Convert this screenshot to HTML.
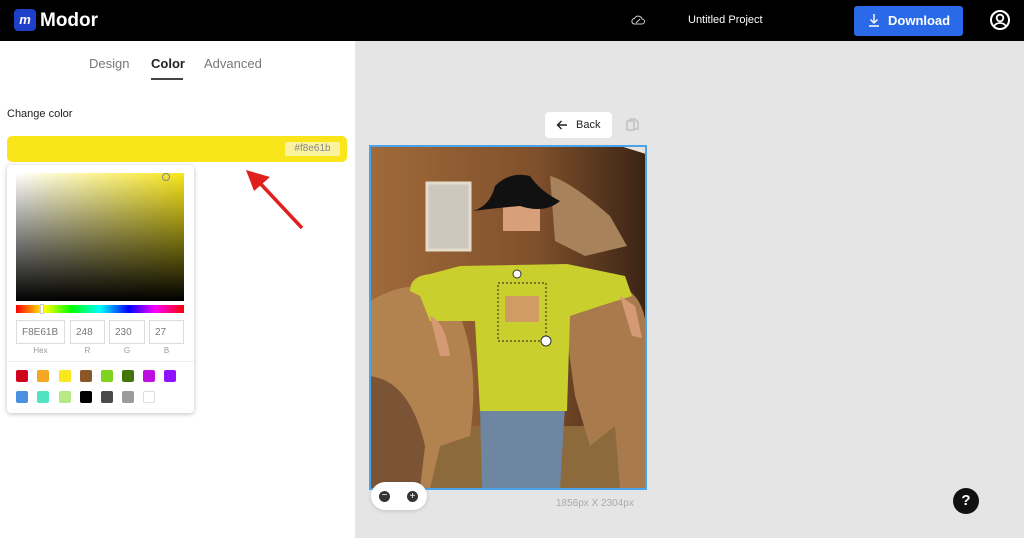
<!DOCTYPE html>
<html><head><meta charset="utf-8"><style>
*{box-sizing:border-box;margin:0;padding:0}
body{width:1024px;height:538px;overflow:hidden;font-family:"Liberation Sans",sans-serif;background:#e5e5e5;position:relative}
.top{position:absolute;left:0;top:0;width:1024px;height:41px;background:#000}
.abs{position:absolute}
.left{position:absolute;left:0;top:41px;width:355px;height:497px;background:#fff}
.sw{position:absolute;width:12px;height:12px;border-radius:2px}
.inp{position:absolute;top:320px;height:24px;border:1px solid #ddd;font-size:10px;color:#777;padding:6px 0 0 5px}
.lab{position:absolute;top:346px;font-size:8px;color:#999;text-align:center}
</style></head><body>
<div class="top"></div>
<div class="abs" style="left:14px;top:9px;width:22px;height:22px;background:#1e3fc7;border-radius:4px;color:#fff;font-style:italic;font-weight:bold;font-size:13px;text-align:center;line-height:21px">m</div>
<div class="abs" style="left:40px;top:10px;color:#fff;font-weight:bold;font-size:19px">Modor</div>
<svg class="abs" style="left:631px;top:14px" width="14" height="12" viewBox="0 0 14 12"><path d="M3 10h8a2.5 2.5 0 0 0 0-5 4 4 0 0 0-7.5-.5A2.8 2.8 0 0 0 3 10z M5 9l4-4" fill="none" stroke="#ccc" stroke-width="1"/></svg>
<div class="abs" style="left:688px;top:14px;color:#fff;font-size:11px">Untitled Project</div>
<div class="abs" style="left:854px;top:6px;width:109px;height:30px;background:#2a6ae8;border-radius:3px;color:#fff;font-size:13px;padding:7px 0 0 34px;font-weight:bold">Download</div>
<svg class="abs" style="left:868px;top:13px" width="12" height="14" viewBox="0 0 12 14"><path d="M6 1v9M2.5 6.5 6 10l3.5-3.5M1 13h10" fill="none" stroke="#fff" stroke-width="1.4"/></svg>
<svg class="abs" style="left:989px;top:9px" width="22" height="22" viewBox="0 0 22 22"><circle cx="11" cy="11" r="9" fill="none" stroke="#fff" stroke-width="2"/><circle cx="11" cy="9" r="3.3" fill="none" stroke="#fff" stroke-width="1.8"/><path d="M5 17c3-4 9-4 12 0" fill="none" stroke="#fff" stroke-width="1.8"/></svg>

<div class="left"></div>
<div class="abs" style="left:89px;top:56px;font-size:13px;color:#777">Design</div>
<div class="abs" style="left:151px;top:56px;font-size:13px;color:#222;font-weight:bold">Color</div>
<div class="abs" style="left:151px;top:78px;width:32px;height:2px;background:#444"></div>
<div class="abs" style="left:204px;top:56px;font-size:13px;color:#777">Advanced</div>
<div class="abs" style="left:7px;top:108px;font-size:11px;color:#222">Change color</div>
<div class="abs" style="left:7px;top:136px;width:340px;height:26px;background:#f8e61b;border-radius:5px"></div>
<div class="abs" style="left:285px;top:142px;width:55px;height:14px;background:#fbf2a0;border-radius:2px;font-size:10px;color:#888;text-align:center;line-height:14px">#f8e61b</div>
<svg class="abs" style="left:240px;top:165px" width="70" height="70" viewBox="0 0 70 70"><path d="M62 63 18 16" stroke="#e0201c" stroke-width="3.5"/><path d="M6 5 30 12 14 26z" fill="#e0201c"/></svg>

<div class="abs" style="left:7px;top:165px;width:187px;height:248px;background:#fff;border-radius:4px;box-shadow:0 1px 5px rgba(0,0,0,.25)"></div>
<div class="abs" style="left:16px;top:173px;width:168px;height:128px;background:linear-gradient(to bottom,rgba(0,0,0,0),#000),linear-gradient(to right,#fff,#f8e61b)"></div>
<div class="abs" style="left:162px;top:173px;width:8px;height:8px;border:1.5px solid #888;border-radius:50%"></div>
<div class="abs" style="left:16px;top:305px;width:168px;height:8px;background:linear-gradient(to right,#f00,#ff0 17%,#0f0 33%,#0ff 50%,#00f 67%,#f0f 83%,#f00)"></div>
<div class="abs" style="left:40px;top:304px;width:4px;height:10px;background:#fff;border:1px solid #ccc"></div>
<div class="inp" style="left:16px;width:49px">F8E61B</div>
<div class="inp" style="left:70px;width:35px">248</div>
<div class="inp" style="left:109px;width:36px">230</div>
<div class="inp" style="left:149px;width:35px">27</div>
<div class="lab" style="left:16px;width:49px">Hex</div>
<div class="lab" style="left:70px;width:35px">R</div>
<div class="lab" style="left:109px;width:36px">G</div>
<div class="lab" style="left:149px;width:35px">B</div>
<div class="abs" style="left:7px;top:361px;width:187px;height:1px;background:#eee"></div>
<div class="sw" style="left:16px;top:370px;background:#d0021b"></div>
<div class="sw" style="left:37px;top:370px;background:#f5a623"></div>
<div class="sw" style="left:59px;top:370px;background:#f8e71c"></div>
<div class="sw" style="left:80px;top:370px;background:#8b572a"></div>
<div class="sw" style="left:101px;top:370px;background:#7ed321"></div>
<div class="sw" style="left:122px;top:370px;background:#417505"></div>
<div class="sw" style="left:143px;top:370px;background:#bd10e0"></div>
<div class="sw" style="left:164px;top:370px;background:#9013fe"></div>
<div class="sw" style="left:16px;top:391px;background:#4a90e2"></div>
<div class="sw" style="left:37px;top:391px;background:#50e3c2"></div>
<div class="sw" style="left:59px;top:391px;background:#b8e986"></div>
<div class="sw" style="left:80px;top:391px;background:#000"></div>
<div class="sw" style="left:101px;top:391px;background:#4a4a4a"></div>
<div class="sw" style="left:122px;top:391px;background:#9b9b9b"></div>
<div class="sw" style="left:143px;top:391px;background:#fff;border:1px solid #ddd"></div>

<div class="abs" style="left:545px;top:112px;width:67px;height:26px;background:#fff;border-radius:4px;font-size:11px;color:#222;padding:7px 0 0 31px">Back</div>
<svg class="abs" style="left:556px;top:119px" width="12" height="12" viewBox="0 0 12 12"><path d="M11 6H1.5M5.5 2 1.5 6l4 4" fill="none" stroke="#222" stroke-width="1.4"/></svg>
<svg class="abs" style="left:626px;top:118px" width="13" height="14" viewBox="0 0 13 14"><rect x="1" y="3" width="7" height="9" fill="none" stroke="#bbb" stroke-width="1.3"/><path d="M4 3V1h5l3 3v7H8" fill="none" stroke="#bbb" stroke-width="1.3"/></svg>

<svg class="abs" style="left:369px;top:145px" width="278" height="345" viewBox="-1 -1 278 345">
<defs><linearGradient id="bg" x1="0" y1="0" x2="1" y2="0"><stop offset="0" stop-color="#a06a3a"/><stop offset=".6" stop-color="#80502c"/><stop offset="1" stop-color="#3a2414"/></linearGradient></defs>
<rect width="276" height="343" fill="url(#bg)"/>
<path d="M250 0 L276 0 L276 8z" fill="#e8e4dc"/>
<rect x="57" y="37" width="43" height="67" fill="#ccc8bd" stroke="#e5dccc" stroke-width="3"/>
<rect x="0" y="280" width="276" height="63" fill="#8c6a3c"/>
<path d="M180 30 Q200 35 240 70 L257 100 L215 110 L185 95z" fill="#a8825a"/>
<path d="M190 140 Q270 120 276 180 L276 343 L250 343 L245 280 L220 300 L205 250z" fill="#a87a4c"/>
<path d="M0 155 Q60 120 90 170 Q110 220 100 290 L70 300 L60 343 L0 343z" fill="#b2824f"/>
<path d="M0 230 Q40 235 55 300 L50 343 L0 343z" fill="#7a5434"/>
<path d="M110 260 L195 260 L190 343 L112 343z" fill="#6e86a2"/>
<path d="M90 120 L197 118 L255 130 L262 150 L230 160 L200 170 L197 265 L110 265 L105 175 L60 175 L50 150 L40 145 Q40 130 60 128z" fill="#c9cf2c"/>
<path d="M133 50 L170 50 L170 85 L133 85z" fill="#d8a07a"/>
<path d="M103 65 Q120 60 125 40 Q140 25 160 30 Q170 45 190 55 Q175 68 150 60 Q125 62 103 65z" fill="#111"/>
<path d="M60 170 Q75 175 80 210 L70 210z" fill="#d39a73"/>
<path d="M250 150 L265 160 L272 192 L262 190z" fill="#d39a73"/>
<rect x="128" y="137" width="48" height="58" fill="none" stroke="#222" stroke-width="1" stroke-dasharray="2,2"/>
<rect x="135" y="150" width="34" height="26" fill="#d96a9a" opacity=".5"/>
<circle cx="176" cy="195" r="5" fill="#fff" stroke="#333"/>
<circle cx="147" cy="128" r="4" fill="#fff" stroke="#333"/>
<rect x="0" y="0" width="276" height="343" fill="none" stroke="#4aa3e8" stroke-width="2"/>
</svg>
<div class="abs" style="left:371px;top:482px;width:56px;height:28px;background:#fff;border-radius:14px;box-shadow:0 1px 4px rgba(0,0,0,.15)"></div>
<div class="abs" style="left:379px;top:491px;width:11px;height:11px;background:#333;border-radius:50%;color:#fff;font-size:10px;line-height:10px;text-align:center">−</div>
<div class="abs" style="left:407px;top:491px;width:11px;height:11px;background:#333;border-radius:50%;color:#fff;font-size:10px;line-height:11px;text-align:center">+</div>
<div class="abs" style="left:556px;top:498px;font-size:10px;color:#aaa">1856px X 2304px</div>
<div class="abs" style="left:953px;top:488px;width:26px;height:26px;background:#111;border-radius:50%;color:#fff;font-weight:bold;font-size:15px;text-align:center;line-height:26px">?</div>
</body></html>
